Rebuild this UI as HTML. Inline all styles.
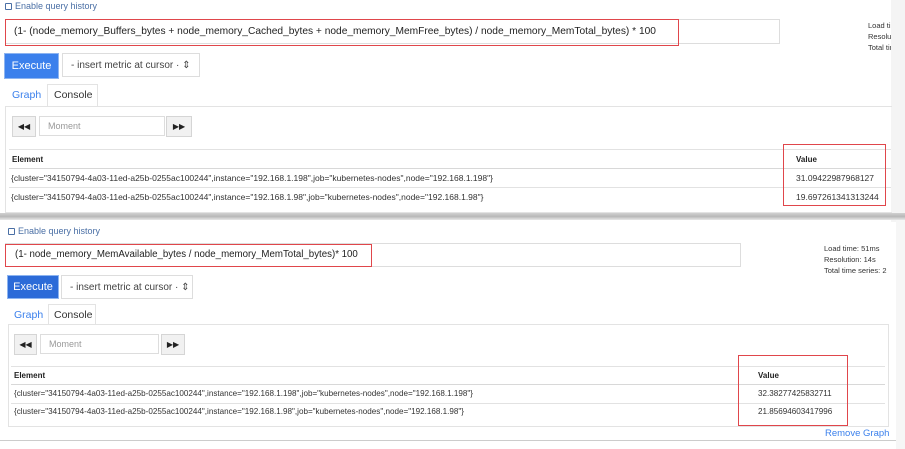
<!DOCTYPE html>
<html><head><style>
*{box-sizing:border-box;margin:0;padding:0}
body{width:905px;height:449px;background:#fff;position:relative;overflow:hidden;font-family:"Liberation Sans",sans-serif;color:#333}
.a{position:absolute}
.hist{font-size:9px;color:#4a6fa5}
.hist b{display:inline-block;width:7px;height:7px;border:1.2px solid #4a6fa5;border-radius:1px;margin-right:3px;vertical-align:-1px}
.ta{border:1px solid #ddd;background:#fff}
.red{border:1.5px solid #e0464b}
.q{color:#222;white-space:nowrap}
.ex{background:#3b80ec;color:#fff;font-size:11px;display:flex;align-items:center;justify-content:center;border:1px solid #8db4f0}
.sel{border:1px solid #ddd;font-size:10px;color:#444;display:flex;align-items:center;padding-left:8px;white-space:nowrap}
.tab{font-size:10.5px}
.box{border:1px solid #e3e3e3}
.btn{border:1px solid #d5d5d5;background:#f1f1f1;font-size:8px;display:flex;align-items:center;justify-content:center;color:#222}
.inp{border:1px solid #ddd;font-size:9px;color:#999;display:flex;align-items:center;padding-left:8px}
.ln{height:1px;background:#e2e2e2}
.t{font-size:8.5px;white-space:nowrap;color:#333}
.h{font-size:8px;font-weight:bold;color:#222}
.info{font-size:7.5px;color:#333;line-height:11px;white-space:nowrap}
</style></head><body>
<!-- top panel -->
<div class="a" style="left:891px;top:0;width:14px;height:222px;background:#f4f4f4"></div>
<div class="a" style="left:0;top:213px;width:905px;height:7px;background:linear-gradient(#d0d0d0,#b8b8b8,#e8e8e8)"></div>
<div class="a hist" style="left:5px;top:1px"><b></b>Enable query history</div>
<div class="a ta" style="left:5px;top:19px;width:775px;height:25px"></div>
<div class="a red" style="left:5px;top:19px;width:674px;height:27px"></div>
<div class="a q" style="left:14px;top:26px;font-size:10.2px">(1- (node_memory_Buffers_bytes + node_memory_Cached_bytes + node_memory_MemFree_bytes) / node_memory_MemTotal_bytes) * 100</div>
<div class="a info" style="left:868px;top:20px;width:23px;overflow:hidden">Load time<br>Resolution<br>Total time</div>
<div class="a ex" style="left:4px;top:53px;width:55px;height:26px">Execute</div>
<div class="a sel" style="left:62px;top:53px;width:138px;height:24px">- insert metric at cursor · ⇕</div>
<div class="a tab" style="left:12px;top:89px;color:#3b80ec">Graph</div>
<div class="a" style="left:47px;top:84px;width:51px;height:23px;border:1px solid #e3e3e3;border-bottom:none;background:#fff"></div>
<div class="a tab" style="left:54px;top:89px">Console</div>
<div class="a box" style="left:5px;top:106px;width:887px;height:107px;border-right:none"></div>
<div class="a btn" style="left:12px;top:116px;width:24px;height:21px">◀◀</div>
<div class="a inp" style="left:39px;top:116px;width:126px;height:20px">Moment</div>
<div class="a btn" style="left:166px;top:116px;width:26px;height:21px">▶▶</div>
<div class="a ln" style="left:9px;top:149px;width:882px"></div>
<div class="a h" style="left:12px;top:155px">Element</div>
<div class="a h" style="left:796px;top:155px">Value</div>
<div class="a ln" style="left:9px;top:168px;width:882px;background:#d8d8d8"></div>
<div class="a t" style="left:11px;top:173px">{cluster="34150794-4a03-11ed-a25b-0255ac100244",instance="192.168.1.198",job="kubernetes-nodes",node="192.168.1.198"}</div>
<div class="a t" style="left:796px;top:173px">31.09422987968127</div>
<div class="a ln" style="left:9px;top:187px;width:882px"></div>
<div class="a t" style="left:11px;top:192px">{cluster="34150794-4a03-11ed-a25b-0255ac100244",instance="192.168.1.98",job="kubernetes-nodes",node="192.168.1.98"}</div>
<div class="a t" style="left:796px;top:192px">19.697261341313244</div>
<div class="a red" style="left:783px;top:144px;width:103px;height:62px"></div>

<!-- bottom panel -->
<div class="a" style="left:896px;top:220px;width:9px;height:229px;background:#f6f6f6"></div>
<div class="a hist" style="left:8px;top:226px"><b></b>Enable query history</div>
<div class="a ta" style="left:5px;top:243px;width:736px;height:24px"></div>
<div class="a red" style="left:5px;top:244px;width:367px;height:23px"></div>
<div class="a q" style="left:15px;top:249px;font-size:9.7px">(1- node_memory_MemAvailable_bytes / node_memory_MemTotal_bytes)* 100</div>
<div class="a info" style="left:824px;top:243px">Load time: 51ms<br>Resolution: 14s<br>Total time series: 2</div>
<div class="a ex" style="left:7px;top:275px;width:52px;height:24px;background:#2c6bd8">Execute</div>
<div class="a sel" style="left:61px;top:275px;width:132px;height:24px">- insert metric at cursor · ⇕</div>
<div class="a tab" style="left:14px;top:309px;color:#3b80ec">Graph</div>
<div class="a" style="left:48px;top:304px;width:48px;height:21px;border:1px solid #e3e3e3;border-bottom:none;background:#fff"></div>
<div class="a tab" style="left:54px;top:309px">Console</div>
<div class="a box" style="left:8px;top:324px;width:881px;height:103px"></div>
<div class="a btn" style="left:14px;top:334px;width:23px;height:21px">◀◀</div>
<div class="a inp" style="left:40px;top:334px;width:119px;height:20px">Moment</div>
<div class="a btn" style="left:161px;top:334px;width:24px;height:21px">▶▶</div>
<div class="a ln" style="left:11px;top:366px;width:874px"></div>
<div class="a h" style="left:14px;top:371px">Element</div>
<div class="a h" style="left:758px;top:371px">Value</div>
<div class="a ln" style="left:11px;top:384px;width:874px;background:#d8d8d8"></div>
<div class="a t" style="left:14px;top:389px;font-size:8.1px">{cluster="34150794-4a03-11ed-a25b-0255ac100244",instance="192.168.1.198",job="kubernetes-nodes",node="192.168.1.198"}</div>
<div class="a t" style="left:758px;top:389px;font-size:8.1px">32.38277425832711</div>
<div class="a ln" style="left:11px;top:403px;width:874px"></div>
<div class="a t" style="left:14px;top:407px;font-size:8.1px">{cluster="34150794-4a03-11ed-a25b-0255ac100244",instance="192.168.1.98",job="kubernetes-nodes",node="192.168.1.98"}</div>
<div class="a t" style="left:758px;top:407px;font-size:8.1px">21.85694603417996</div>
<div class="a red" style="left:738px;top:355px;width:110px;height:71px"></div>
<div class="a" style="left:825px;top:428px;font-size:9.5px;color:#3b80ec">Remove Graph</div>
<div class="a" style="left:0;top:440px;width:896px;height:1px;background:#ccc"></div>
</body></html>
